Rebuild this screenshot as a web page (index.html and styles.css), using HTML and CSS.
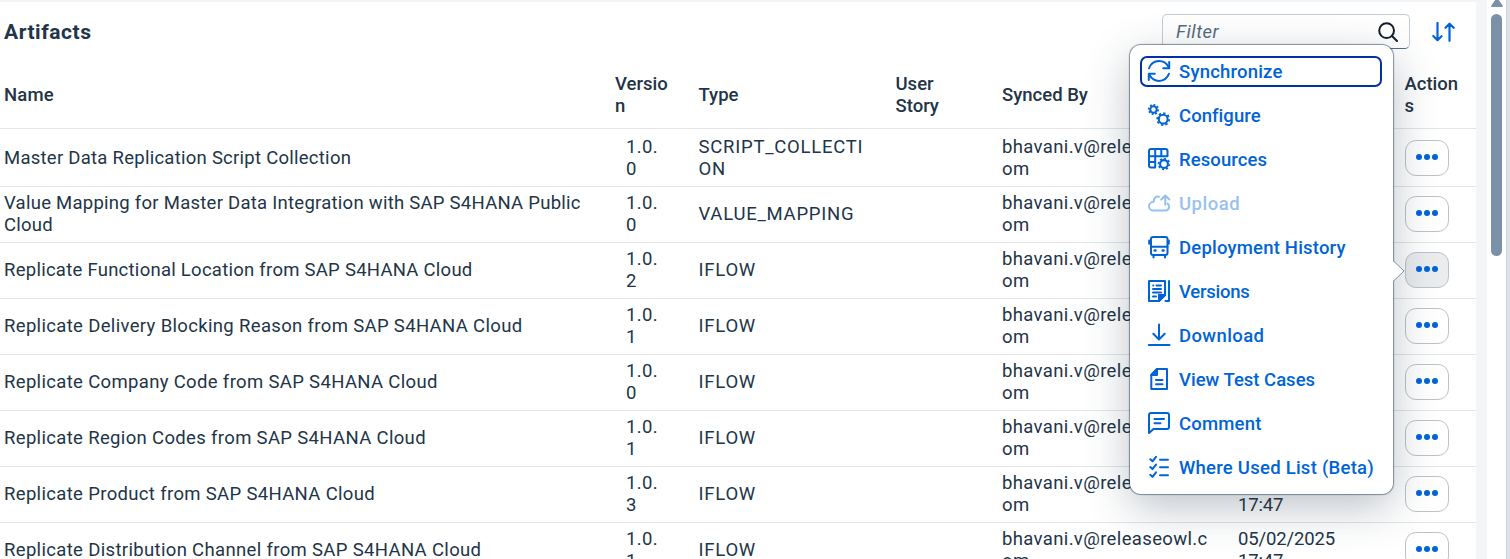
FILE: index.html
```html
<!DOCTYPE html>
<html lang="en">
<head>
<meta charset="utf-8">
<title>Artifacts</title>
<link rel="stylesheet" href="styles.css">
</head>
<body>
<div class="page">
  <main class="panel">
    <header class="toolbar">
      <h1 class="title">Artifacts</h1>
      <div class="search"><span class="placeholder">Filter</span>
        <svg class="search-icon" viewBox="0 0 20 20"><circle cx="8.6" cy="8.6" r="7.4"/><path d="M14 14l5 5"/></svg>
      </div>
      <svg class="sort-icon" viewBox="0 0 24 20"><path d="M6.500 1v17.200M2.300 14l4.200 4.200 4-4M18.500 18.800V1.800M14.500 5.800l4-4 4.200 4"/></svg>
    </header>
    <div class="row head">
      <div class="name">Name</div><div>Versio<br>n</div><div>Type</div><div>User<br>Story</div><div>Synced By</div><div></div><div>Action<br>s</div>
    </div>
    <div id="rows"></div>
  </main>
  <div class="gutter"></div>
  <aside class="scrollbar"><div class="arrow-up"></div><div class="thumb"></div></aside>
  <div class="edge"></div>
</div>

<nav class="menu">
  <svg class="pointer" viewBox="0 0 13 24"><path class="pointer-fill" d="M0 1 12 12 0 23z"/><path class="pointer-line" d="M1 1.500 12 12 1 22.500"/></svg>
  <div class="item focused"><svg viewBox="0 0 22 22"><path d="M1 8.300C2.600 4 6.300 1.100 11 1.100c4 0 7.400 2 9.300 5.600M21 13.700c-1.600 4.300-5.300 7.200-10 7.200-4 0-7.400-2-9.300-5.600"/><path d="M21.200 2v6.200h-6M.8 20v-6.200h6"/></svg><span class="w-sync">Synchronize</span></div>
  <div class="item"><svg viewBox="0 0 22 22"><circle class="ring" cx="5.500" cy="5.500" r="3.300"/><circle class="teeth" cx="5.500" cy="5.500" r="4.700" pathLength="32"/><circle class="ring" cx="15.200" cy="15.200" r="4.400"/><circle class="teeth" cx="15.200" cy="15.200" r="6" pathLength="32"/></svg><span class="w-conf">Configure</span></div>
  <div class="item"><svg viewBox="0 0 22 22"><path d="M7.200 19.500H3a2 2 0 0 1-2-2V3a2 2 0 0 1 2-2h14.500a2 2 0 0 1 2 2v5.200M1 8.200h18.500M7.200 1v18.500M13.300 1v7M1 14h6"/><circle class="ring" cx="16" cy="16" r="3.900"/><circle class="teeth" cx="16" cy="16" r="5.400" pathLength="32"/></svg><span class="w-res">Resources</span></div>
  <div class="item disabled"><svg viewBox="0 0 22 22"><path d="M11 4.800C8.500 3.600 5.500 6.200 5.700 9.800 2.800 9.800 1 11.800 1 14.200c0 2.600 2 4.400 4.500 4.400H17c2.400 0 4-1.600 4-4 0-1.300-.5-2.400-1.300-3M17.300 12.800V3.700M13.300 7.500l4-4 4 4"/></svg><span class="w-up">Upload</span></div>
  <div class="item"><svg viewBox="0 0 22 22"><rect x="3" y="1" width="16.500" height="18" rx="2"/><path d="M3 10.700h16.500M1.200 4.500v3.200M20.800 4.500v3.200M5.500 19v2.500M17 19v2.500"/><path d="M6.700 14.500h.8M14.700 14.500h.8" stroke-width="2.500"/></svg><span class="w-dep">Deployment History</span></div>
  <div class="item"><svg viewBox="0 0 22 22"><path d="M11 21H1V1h16v14zM11 21v-6h6zM21 1v20h-3.500"/><path class="solid" d="M11 21v-6h6z"/><path d="M5.200 5.500h.1M8.500 5.500h4.500M5 9h8M5 12.500h8M5 16.500h3"/></svg><span class="w-ver">Versions</span></div>
  <div class="item"><svg viewBox="0 0 22 22"><path d="M11 .5V15M5.300 9.800l5.700 5.700 5.700-5.700M.8 21h20.700"/></svg><span class="w-down">Download</span></div>
  <div class="item"><svg viewBox="0 0 22 22"><path d="M9 1h10v20H3.300V7z"/><path class="solid" d="M9 1v6H3.300z"/><path d="M8 12h6.500M8 16.200h6.500"/></svg><span class="w-view">View Test Cases</span></div>
  <div class="item"><svg viewBox="0 0 22 22"><path d="M1 21V3a2 2 0 0 1 2-2h16a2 2 0 0 1 2 2v12a2 2 0 0 1-2 2H5.500zM6.500 7h9.500M6.500 11.200h6"/></svg><span class="w-com">Comment</span></div>
  <div class="item"><svg viewBox="0 0 22 22"><path d="M2.300 3.200 4.500 5.300 8 .8M2.300 11l2.200 2.100L8 8.600M2.300 18.800l2.200 2.100L8 16.400M12 3.700h8M12 11.300h8M12 19.200h8"/></svg><span class="w-where">Where Used List (Beta)</span></div>
</nav>
<script src="rows.js"></script>
</body>
</html>
```

FILE: rows.js
```js
const artifacts = [
  ["Master Data Replication Script Collection", "0", "SCRIPT_COLLECTI<br>ON"],
  ["Value Mapping for Master Data Integration with SAP S4HANA Public<br>Cloud", "0", "VALUE_MAPPING"],
  ["Replicate Functional Location from SAP S4HANA Cloud", "2", "IFLOW"],
  ["Replicate Delivery Blocking Reason from SAP S4HANA Cloud", "1", "IFLOW"],
  ["Replicate Company Code from SAP S4HANA Cloud", "0", "IFLOW"],
  ["Replicate Region Codes from SAP S4HANA Cloud", "1", "IFLOW"],
  ["Replicate Product from SAP S4HANA Cloud", "3", "IFLOW"],
  ["Replicate Distribution Channel from SAP S4HANA Cloud", "1", "IFLOW"]
];
document.getElementById("rows").innerHTML = artifacts.map(([name, patch, type], i) => `
  <div class="row">
    <div class="name${i > 2 ? " wide" : ""}">${name}</div>
    <div class="version">1.0.<br>${patch}</div>
    <div class="type">${type}</div>
    <div></div>
    <div class="by">bhavani.v@releaseowl.c<br>om</div>
    <div class="date">05/02/2025<br>17:47</div>
    <div><button class="more${i === 2 ? " active" : ""}" aria-label="Actions"><i></i><i></i><i></i></button></div>
  </div>`).join("");
```

FILE: styles.css
```css
* { box-sizing: border-box; }
body { margin: 0; height: 559px; overflow: hidden; background: #fff; color: #223548; font-family: Roboto, "Noto Sans", sans-serif; font-size: 18.5px; line-height: 22px; }
.page { display: flex; height: 559px; overflow: hidden; }
.panel { width: 1476px; flex: none; border-top: 2px solid #f4f5f6; }
.gutter { width: 11px; flex: none; background: #f4f5f7; }
.scrollbar { width: 19px; flex: none; padding-left: 4px; background: #fff; }
.arrow-up { width: 12px; height: 7px; background: #7b91a8; clip-path: polygon(35% 0, 65% 0, 100% 85%, 95% 100%, 5% 100%, 0 85%); }
.thumb { width: 11px; height: 242px; margin-top: 7px; border-radius: 6px; background: #7b91a8; }
.edge { width: 4px; flex: none; background: #dde2e6; border-left: 1px solid #cbd2d8; }
.toolbar { display: flex; align-items: center; height: 59px; padding-left: 4px; }
.title { margin: 0; flex: 1; font-size: 21px; font-weight: 700; letter-spacing: .55px; }
.search { display: flex; align-items: center; justify-content: space-between; width: 248px; height: 35px; padding: 0 11px 0 13px; border: 1px solid #c4cdd6; border-bottom-color: #556b81; border-radius: 5px; margin-right: 21px; }
.placeholder { color: #556b82; font-style: italic; letter-spacing: .5px; }
.search-icon { width: 20px; height: 20px; fill: none; stroke: #131e29; stroke-width: 2; stroke-linecap: round; }
.sort-icon { width: 24px; height: 20px; margin-right: 21px; fill: none; stroke: #0064d9; stroke-width: 2.2; stroke-linecap: round; stroke-linejoin: round; }
.row { display: grid; grid-template-columns: 615px 83.5px 197px 106.5px 236px 166.5px 71.5px; align-items: center; height: 56px; padding-bottom: 1px; border-bottom: 1px solid #e2e4e6; white-space: nowrap; }
.row:first-child { height: 58px; padding-bottom: 0; }
.row.head { height: 68px; padding-bottom: 0; font-weight: 500; }
.name { padding-left: 4px; letter-spacing: .26px; }
.head .name { letter-spacing: .2px; }
.name.wide { letter-spacing: .34px; }
.version { padding-left: 11px; letter-spacing: .4px; }
.type { letter-spacing: .75px; }
.by { letter-spacing: .36px; }
.date { letter-spacing: -.15px; }
.more { display: flex; align-items: center; justify-content: center; gap: 2px; width: 44px; height: 36px; margin-left: .5px; padding: 0 0 2px; border: 1px solid #bcc3ca; border-radius: 11px; background: #fff; }
.more.active { background: #eaecee; }
.more i { width: 6px; height: 6px; border-radius: 50%; background: #0064d9; }
.menu { position: absolute; left: 1130px; top: 45px; width: 263px; height: 449px; padding: 11px 10px; border-radius: 11px; background: #fff; box-shadow: 0 0 1px 1px rgba(34, 53, 72, .52), 0 13px 44px rgba(34, 53, 72, .3); }
.pointer { position: absolute; left: 262px; top: 214px; width: 13px; height: 24px; }
.pointer-fill { fill: #fff; }
.pointer-line { fill: none; stroke: #8792a0; }
.item { display: flex; align-items: center; gap: 8.5px; width: 242px; height: 31px; margin-bottom: 13px; padding-left: 6.5px; border: 2px solid transparent; border-radius: 7px; color: #0064d9; font-weight: 500; letter-spacing: .2px; white-space: nowrap; }
.item.focused { border-color: #0032a5; }
.item.disabled { opacity: .4; }
.item svg { width: 22px; height: 22px; margin: -1px .5px 0 -.5px; flex: none; overflow: visible; fill: none; stroke: currentColor; stroke-width: 2; stroke-linecap: round; stroke-linejoin: round; }
.item .ring { stroke-width: 2.1; }
.item .teeth { stroke-width: 1.8; stroke-linecap: butt; stroke-dasharray: 2 2; }
.item .solid { fill: currentColor; }
.w-conf { letter-spacing: .05px; }
.w-res { letter-spacing: .1px; }
.w-up { letter-spacing: .5px; }
.w-ver { letter-spacing: -.25px; }
.w-down { letter-spacing: .4px; }
.w-view { letter-spacing: 0; }
.w-where { letter-spacing: .25px; }
```
